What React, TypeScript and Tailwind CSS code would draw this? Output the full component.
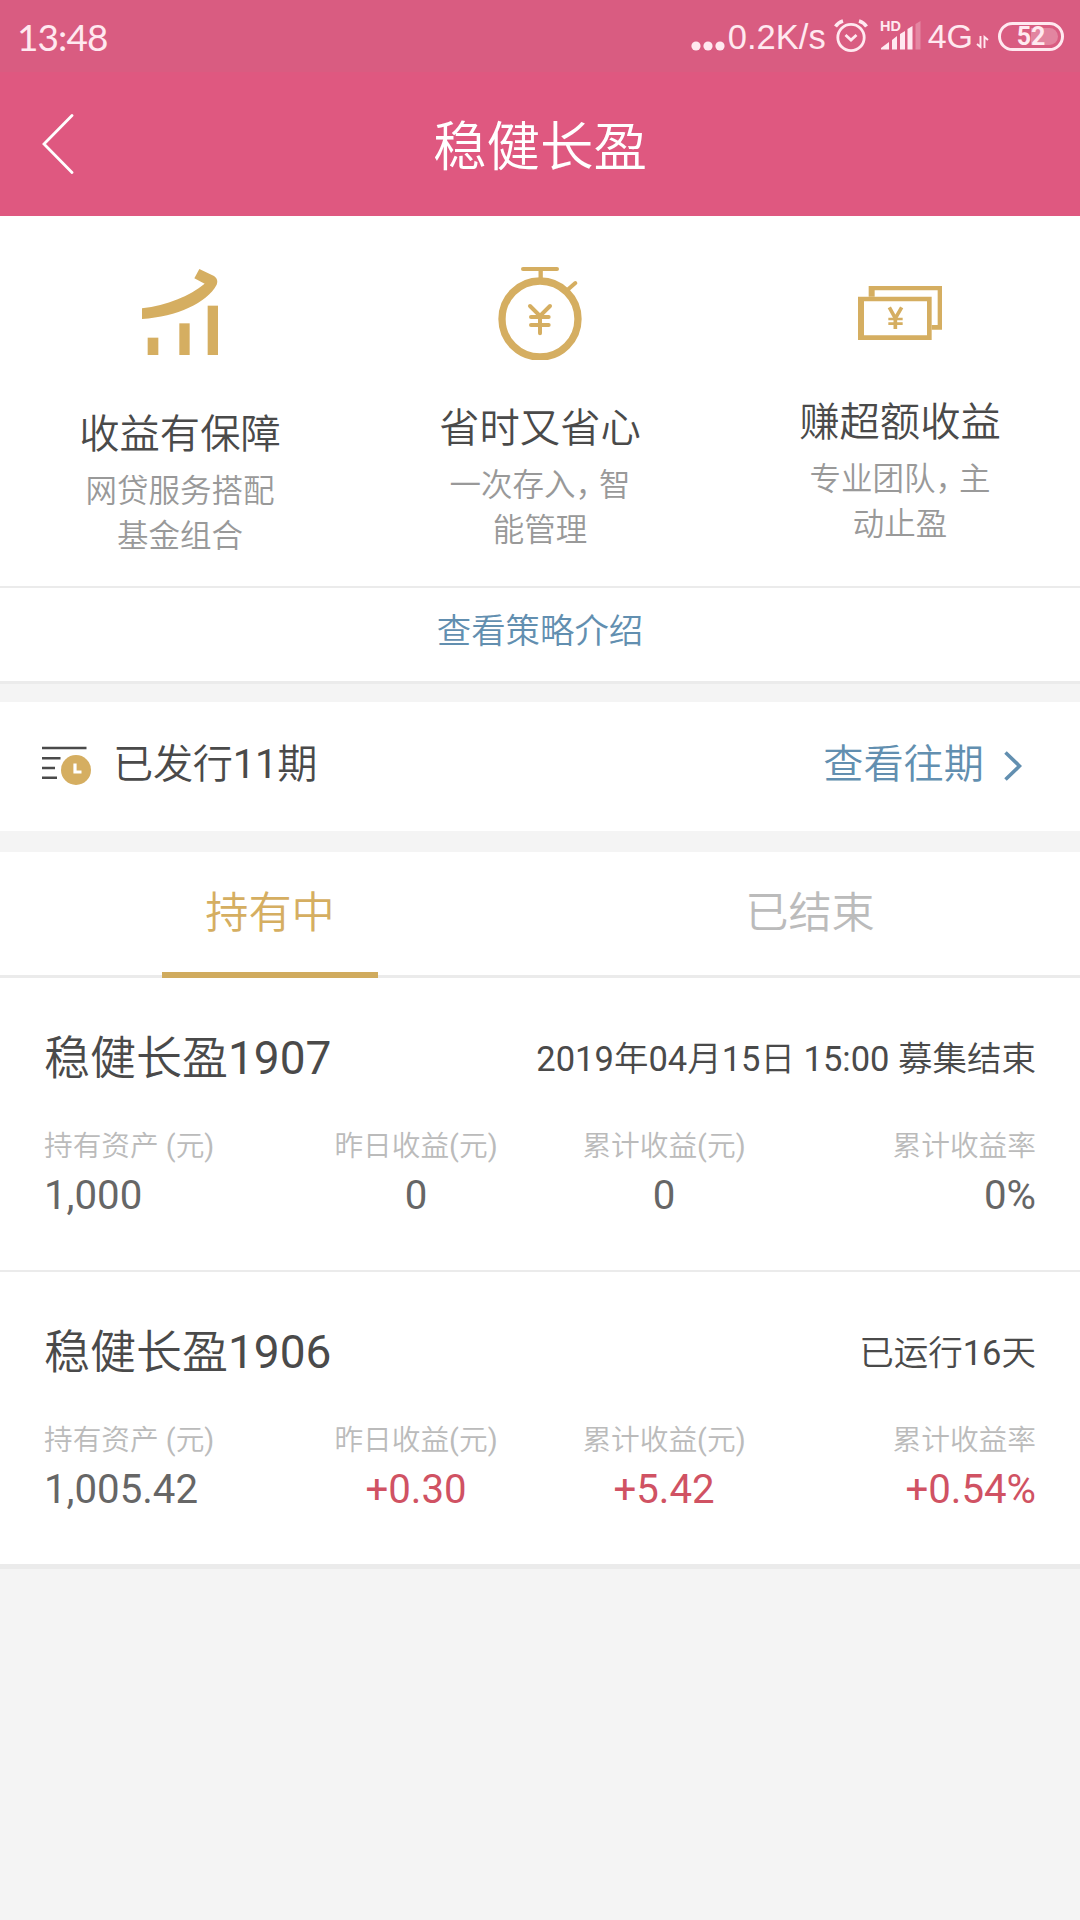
type Feature = {
  icon: React.ReactNode
  title: string
  lines: string[]
  offset: string
}

type Stat = { label: string; value: string; gain?: boolean }

const GOLD = "#d5ae61"

function ChartIcon() {
  return (
    <svg width="76" height="86" viewBox="246 88 228 258" fill={GOLD}>
      <path d="M246 206C322 196 388 170 434 132L403 116L418 88L462 109Q476 118 470 135C440 190 352 230 246 238Z" />
      <rect x="263" y="294" width="32" height="52" />
      <rect x="358" y="251" width="31" height="95" />
      <rect x="443" y="198" width="31" height="148" />
    </svg>
  )
}

function StopwatchIcon() {
  return (
    <svg width="84" height="93" viewBox="294 81 252 279" fill="none" stroke={GOLD} strokeLinecap="round">
      <circle cx="420" cy="237" r="114" strokeWidth="22" />
      <path d="M369 87H471" strokeWidth="12" />
      <path d="M422 90V118" strokeWidth="13" strokeLinecap="butt" />
      <path d="M502 150L526 129" strokeWidth="12" />
      <path d="M390 198L420 228L450 198M393 231H446M393 255H446M420 228V280" strokeWidth="12" />
    </svg>
  )
}

function BillsIcon() {
  return (
    <svg width="84" height="54" viewBox="294 139 252 162" fill="none" stroke={GOLD}>
      <path d="M294 171H515V301H294ZM312 185V287H501V185Z" fill={GOLD} fillRule="evenodd" stroke="none" />
      <path d="M326 171V139H546V270H515V256H533V152H344V171Z" fill={GOLD} stroke="none" />
      <path d="M388 203L406 236L425 203M406 234V268" strokeWidth="11" />
      <path d="M385 238H428M385 252H428" strokeWidth="8" />
    </svg>
  )
}

const features: Feature[] = [
  { icon: <ChartIcon />, title: "收益有保障", lines: ["网贷服务搭配", "基金组合"], offset: "h-[195px] pt-[53px]" },
  { icon: <StopwatchIcon />, title: "省时又省心", lines: ["一次存入，智", "能管理"], offset: "h-[189px] pt-[51px]" },
  { icon: <BillsIcon />, title: "赚超额收益", lines: ["专业团队，主", "动止盈"], offset: "h-[183px] pt-[70px]" },
]

const products: { name: string; status: string; stats: Stat[] }[] = [
  {
    name: "稳健长盈1907",
    status: "2019年04月15日 15:00 募集结束",
    stats: [
      { label: "持有资产 (元)", value: "1,000" },
      { label: "昨日收益(元)", value: "0" },
      { label: "累计收益(元)", value: "0" },
      { label: "累计收益率", value: "0%" },
    ],
  },
  {
    name: "稳健长盈1906",
    status: "已运行16天",
    stats: [
      { label: "持有资产 (元)", value: "1,005.42" },
      { label: "昨日收益(元)", value: "+0.30", gain: true },
      { label: "累计收益(元)", value: "+5.42", gain: true },
      { label: "累计收益率", value: "+0.54%", gain: true },
    ],
  },
]

function StatusBar() {
  return (
    <div className="flex h-[72px] items-center justify-between bg-[#d95c81] pl-[17px] pr-[16px] text-[#ffe9f0]">
      <span className="font-['Lato'] text-[37px] leading-none tracking-[-0.9px]">13:48</span>
      <div className="flex items-center">
        <svg width="34" height="10" viewBox="0 0 34 10" fill="currentColor" className="mt-[19px] mr-[3px]">
          <circle cx="5" cy="5" r="4.6" />
          <circle cx="17" cy="5" r="4.6" />
          <circle cx="29" cy="5" r="4.6" />
        </svg>
        <span className="mt-[2px] font-['Liberation_Sans'] text-[34.5px] leading-none">0.2K/s</span>
        <svg width="34" height="34" viewBox="0 0 34 34" fill="none" stroke="currentColor" strokeWidth="2.8" className="ml-[8px]">
          <circle cx="17" cy="18.5" r="13.2" />
          <path d="M1.5 7.5Q4 3.5 9 2M32.5 7.5Q30 3.5 25 2" strokeWidth="3.4" />
          <path d="M11.5 16L17 21L22.5 16" />
        </svg>
        <svg width="41" height="48" viewBox="0 -9 41 48" fill="currentColor" className="ml-[12px]">
          <text x="0" y="10" fontSize="14.5" fontWeight="700" fontFamily="Liberation Sans, sans-serif">HD</text>
          <path d="M1 28.5V27L9 21V28.5ZM12 19L17 15V28.5H12ZM20 13L25 10V28.5H20ZM27.5 8L32.5 5V28.5H27.5Z" />
          <path d="M35.5 3L40.5 0V28.5H35.5Z" opacity=".3" />
        </svg>
        <span className="ml-[7px] font-['Liberation_Sans'] text-[34px] leading-none">4G</span>
        <svg width="13" height="14" viewBox="0 0 13 14" fill="none" stroke="currentColor" strokeWidth="1.9" className="mt-[12px] ml-[3px]">
          <path d="M4.5 1V12L1 9M8.5 13V2L12 5" />
        </svg>
        <div className="relative ml-[9px] flex h-[29px] w-[66px] items-center justify-center rounded-full border-[3px] border-[#ffe9f0]">
          <div className="absolute right-[3px] h-[17px] w-[27px] rounded-r-full bg-white/25" />
          <span className="relative font-['Roboto'] text-[25px] leading-none font-bold">52</span>
        </div>
      </div>
    </div>
  )
}

// the full-width comma is set tighter than the other characters
function Line({ text }: { text: string }) {
  const [head, tail] = text.split("，")
  return (
    <span className="block">
      {head}
      {tail && <span className="tracking-[-8px]">，</span>}
      {tail}
    </span>
  )
}

function StatCell({ stat, align }: { stat: Stat; align: string }) {
  return (
    <div className={align}>
      <div className="text-[28.7px] leading-[40px] text-[#bbb]">{stat.label}</div>
      <div className={`mt-[6px] text-[40.2px] leading-[48px] ${stat.gain ? "text-[#d05263]" : "text-[#666]"}`}>
        {stat.value}
      </div>
    </div>
  )
}

const aligns = ["text-left", "text-center", "text-center", "text-right"]

export default function App() {
  return (
    <div className="min-h-[1920px] w-[1080px] bg-[#f4f4f4] font-['Roboto','Noto_Sans_CJK_SC_DemiLight','Noto_Sans_CJK_SC',sans-serif] font-normal whitespace-nowrap text-[#4a4a4a]">
      <StatusBar />
      <header className="grid h-[144px] grid-cols-[1fr_auto_1fr] items-center bg-[#df5880] text-white">
        <svg width="34" height="60" viewBox="0 0 34 60" fill="none" stroke="currentColor" strokeWidth="2.8" strokeLinecap="round" className="ml-[41px]">
          <path d="M31 1.5L3 30L31 58.5" />
        </svg>
        <h1 className="pt-[8px] text-[53.5px] leading-[72px]">稳健长盈</h1>
      </header>

      <section className="border-b-[3px] border-[#ebebeb] bg-white">
        <div className="grid h-[370px] grid-cols-3 text-center">
          {features.map((f) => (
            <div key={f.title}>
              <div className={`flex justify-center ${f.offset}`}>{f.icon}</div>
              <h2 className="text-[40.3px] leading-[48px]">{f.title}</h2>
              <p className="mt-[10px] text-[31.5px] leading-[45px] text-[#999]">
                {f.lines.map((line) => (
                  <Line key={line} text={line} />
                ))}
              </p>
            </div>
          ))}
        </div>
        <a className="flex h-[95px] justify-center border-t-2 border-[#ebebeb] pt-[19px] text-[34.4px] leading-[48px] text-[#628fb0]">
          查看策略介绍
        </a>
      </section>

      <section className="mt-[18px] flex h-[129px] items-center bg-white pr-[58px] pl-[42px] text-[40.2px] leading-[48px]">
        <svg width="50" height="40" viewBox="0 0 50 40" fill="none" className="-mt-[4px]">
          <path d="M0 3H44.5M0 13.3H18.5M0 23H13M0 32.7H15" stroke="#4a4a4a" strokeWidth="2.6" />
          <circle cx="34" cy="25" r="15" fill={GOLD} />
          <path d="M33 18.5V27H39.5" stroke="#fff" strokeWidth="3.2" />
        </svg>
        <span className="ml-[21px] pb-[4px] tracking-[-0.3px]">已发行11期</span>
        <span className="ml-auto pb-[4px] text-[#628fb0]">查看往期</span>
        <svg width="18" height="30" viewBox="0 0 18 30" fill="none" stroke="#628fb0" strokeWidth="3.6" className="ml-[20px] -mt-[2px]">
          <path d="M1.5 1.5L15.5 15L1.5 28.5" />
        </svg>
      </section>

      <section className="mt-[21px] border-b-[5px] border-[#ebebeb] bg-white">
        <div className="grid h-[126px] grid-cols-2 border-b-[3px] border-[#ebebeb] text-center text-[43.2px] leading-[120px]">
          <div className="-mb-[3px] flex flex-col text-[#d5ae61]">
            <span className="h-[120px] pt-[2px]">持有中</span>
            <div className="mx-auto h-[6px] w-[216px] bg-[#d0ab5e]" />
          </div>
          <div className="pt-[2px] text-[#bbb]">已结束</div>
        </div>
        {products.map((p, i) => (
          <div key={p.name} className={`px-[44px] pt-[52px] ${i === 0 ? "h-[294px] border-b-2 border-[#ebebeb]" : "h-[292px]"}`}>
            <div className="flex h-[56px] items-center justify-between leading-[56px]">
              <span className="text-[46px]">{p.name}</span>
              <span className="pt-[2px] text-[34.5px]">{p.status}</span>
            </div>
            <div className="mt-[40px] grid grid-cols-4">
              {p.stats.map((s, j) => (
                <StatCell key={j} stat={s} align={aligns[j]} />
              ))}
            </div>
          </div>
        ))}
      </section>
    </div>
  )
}
